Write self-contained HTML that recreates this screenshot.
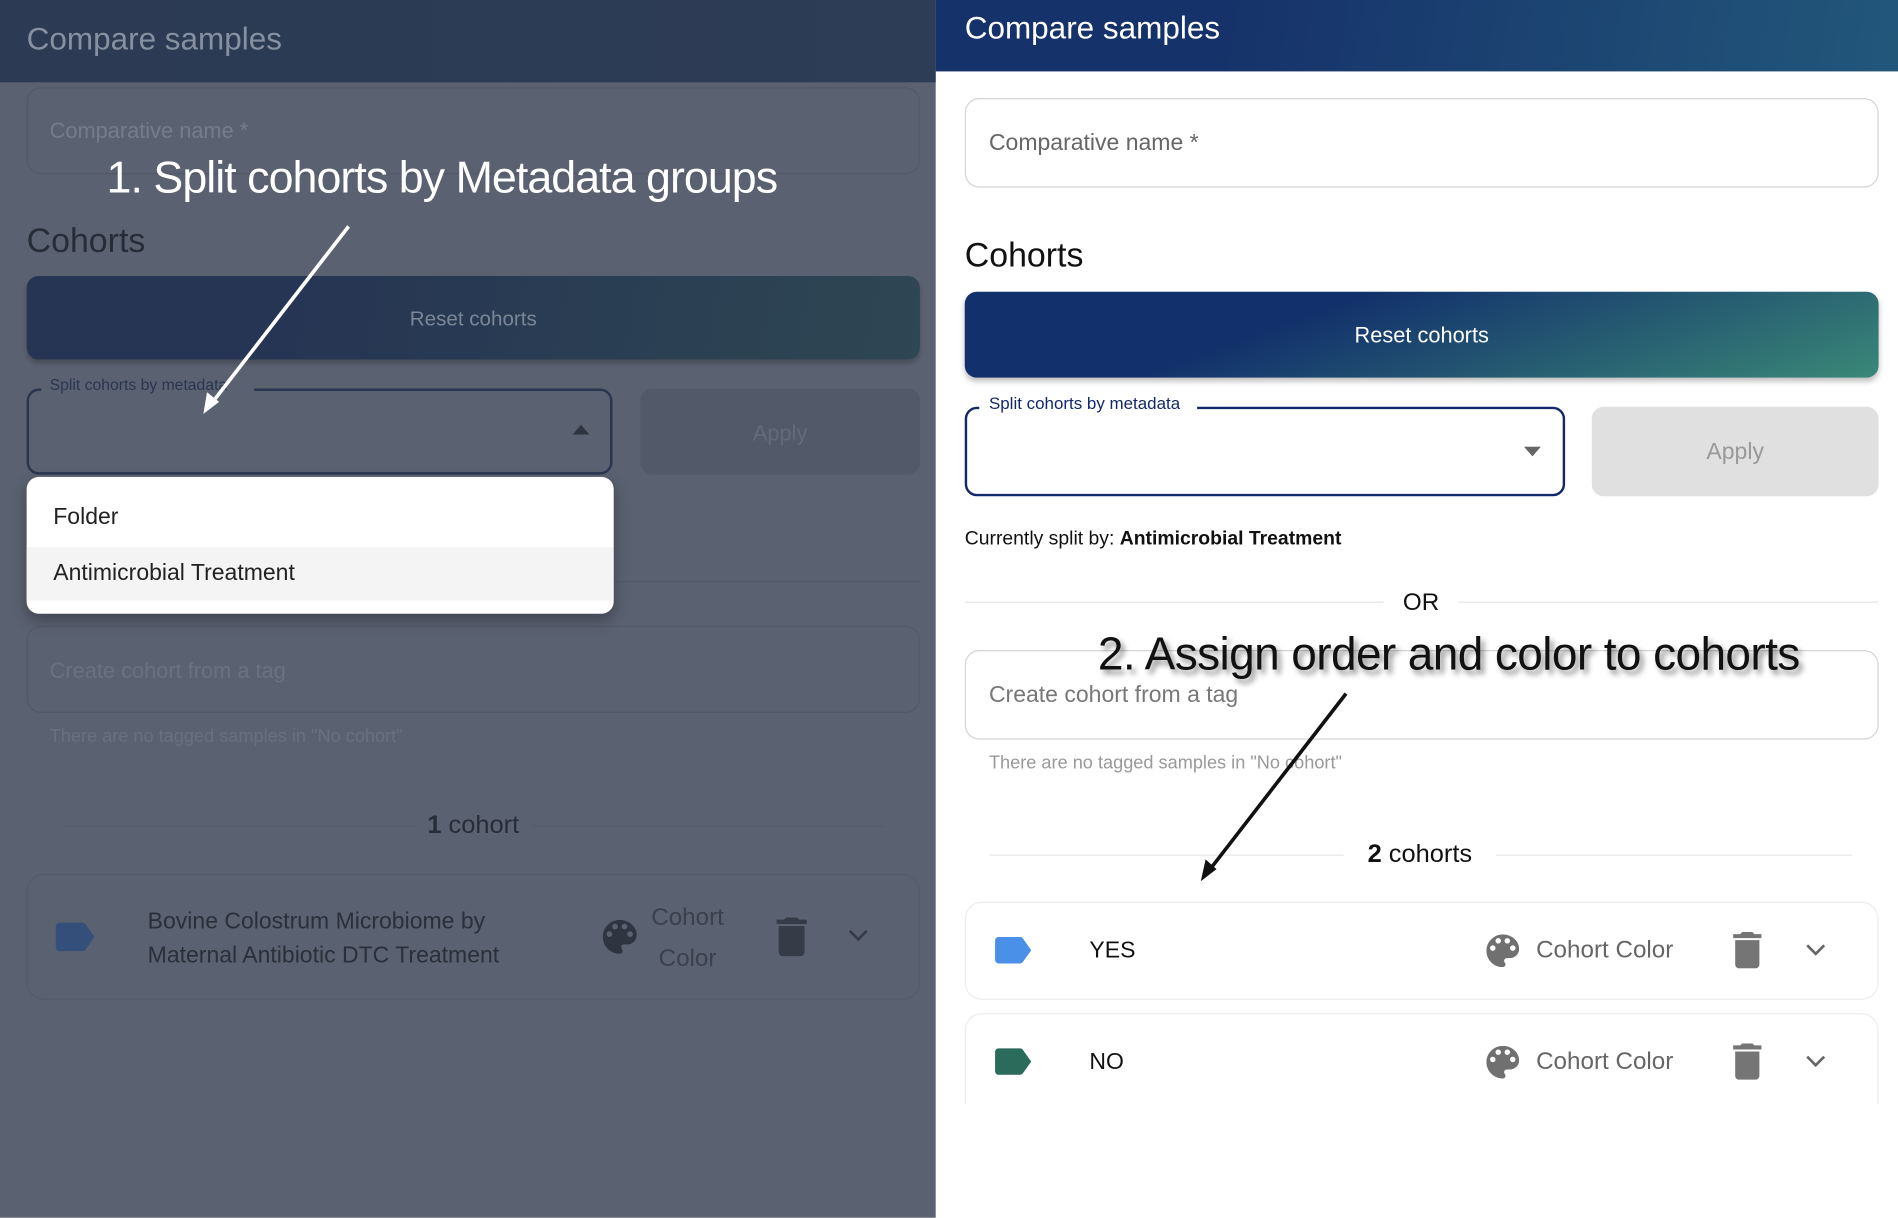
<!DOCTYPE html>
<html><head><meta charset="utf-8"><style>
html,body{margin:0;padding:0;width:1898px;height:1218px;overflow:hidden;background:#fff;font-family:"Liberation Sans",sans-serif;}
#s{position:absolute;left:0;top:0;width:1568px;height:1006px;transform:scale(1.21046);transform-origin:0 0;}
.a{position:absolute;box-sizing:border-box;}
.t{position:absolute;white-space:nowrap;line-height:1;}
svg{position:absolute;}
</style></head><body><div id="s">

<!-- LEFT (dimmed) -->
<div class="a" style="left:0;top:0;width:773px;height:1006px;background:#5a6170;"></div>
<div class="a" style="left:0;top:0;width:773px;height:68px;background:linear-gradient(90deg,#2c3a53,#2d3d55);"></div>
<div class="t" style="left:22px;top:19px;font-size:26px;color:#8690a0;">Compare samples</div>
<div class="a" style="left:22px;top:72px;width:738px;height:72px;border:1px solid #525969;border-radius:12px;"></div>
<div class="t" style="left:41px;top:99px;font-size:18px;color:#757d8a;">Comparative name *</div>
<div class="t" style="left:22px;top:185px;font-size:28px;color:#272d38;">Cohorts</div>
<div class="a" style="left:22px;top:228px;width:738px;height:69px;border-radius:10px;background:linear-gradient(100deg,#263553 30%,#2e4753);box-shadow:0 3px 4px rgba(0,0,0,.2);"></div>
<div class="t" style="left:22px;width:738px;text-align:center;top:255px;font-size:17px;color:#7c8696;">Reset cohorts</div>
<div class="a" style="left:22px;top:321px;width:484px;height:71px;border:2px solid #2a3650;border-radius:10px;"></div>
<div class="a" style="left:34px;top:310px;width:176px;height:14px;background:#5a6170;"></div>
<div class="t" style="left:41px;top:311px;font-size:13px;color:#2a3650;">Split cohorts by metadata</div>
<svg style="left:473px;top:351px" width="14" height="8"><path d="M0 8L7 0L14 8Z" fill="#2f3540"/></svg>
<div class="a" style="left:529px;top:321px;width:231px;height:71px;border-radius:10px;background:#525968;"></div>
<div class="t" style="left:529px;width:231px;text-align:center;top:349px;font-size:18px;color:#646b78;">Apply</div>
<div class="a" style="left:22px;top:480px;width:738px;height:1px;background:#535a68;"></div>
<div class="a" style="left:22px;top:517px;width:738px;height:72px;border:1px solid #525969;border-radius:12px;"></div>
<div class="t" style="left:41px;top:545px;font-size:18px;color:#6a7280;">Create cohort from a tag</div>
<div class="t" style="left:41px;top:601px;font-size:15px;color:#697180;">There are no tagged samples in "No cohort"</div>
<div class="a" style="left:52px;top:682px;width:290px;height:1px;background:#555c6a;"></div>
<div class="a" style="left:440px;top:682px;width:290px;height:1px;background:#555c6a;"></div>
<div class="t" style="left:22px;width:738px;text-align:center;top:671px;font-size:21px;color:#272d38;"><b>1</b> cohort</div>
<div class="a" style="left:22px;top:722px;width:738px;height:104px;border:1px solid #545b69;border-radius:14px;"></div>
<svg style="left:46px;top:762px" width="32" height="24" viewBox="3 5 19 14"><path d="M17.63 5.84C17.27 5.33 16.67 5 16 5L5 5.01C3.9 5.01 3 5.9 3 7v10c0 1.1.9 1.99 2 1.99L16 19c.67 0 1.27-.33 1.63-.84L22 12z" fill="#34507a"/></svg>
<div class="t" style="left:122px;top:748px;font-size:19px;color:#2a303a;line-height:28px;">Bovine Colostrum Microbiome by<br>Maternal Antibiotic DTC Treatment</div>
<svg style="left:498px;top:760px" width="28" height="28" viewBox="3 3 18 18"><path d="M12 3c-4.97 0-9 4.03-9 9s4.03 9 9 9c.83 0 1.5-.67 1.5-1.5 0-.39-.15-.74-.39-1.01-.23-.26-.38-.61-.38-.99 0-.83.67-1.5 1.5-1.5H16c2.76 0 5-2.24 5-5 0-4.42-4.03-8-9-8zm-5.5 9c-.83 0-1.5-.67-1.5-1.5S5.67 9 6.5 9 8 9.67 8 10.5 7.33 12 6.5 12zm3-4C8.67 8 8 7.33 8 6.5S8.67 5 9.5 5s1.5.67 1.5 1.5S10.33 8 9.5 8zm5 0c-.83 0-1.5-.67-1.5-1.5S13.67 5 14.5 5s1.5.67 1.5 1.5S15.33 8 14.5 8zm3 4c-.83 0-1.5-.67-1.5-1.5S16.67 9 17.5 9s1.5.67 1.5 1.5-.67 1.5-1.5 1.5z" fill="#2f3540"/></svg>
<div class="t" style="left:535px;width:66px;text-align:center;top:741px;font-size:20px;color:#3a404c;line-height:34px;">Cohort<br>Color</div>
<svg style="left:640px;top:758px" width="28" height="32" viewBox="5 3 14 18"><path d="M6 19c0 1.1.9 2 2 2h8c1.1 0 2-.9 2-2V7H6v12zM19 4h-3.5l-1-1h-5l-1 1H5v2h14V4z" fill="#353b47"/></svg>
<svg style="left:700px;top:767px" width="18" height="12"><path d="M2 2L9 9L16 2" stroke="#353b47" stroke-width="2.2" fill="none"/></svg>

<!-- dropdown menu -->
<div class="a" style="left:22px;top:394px;width:485px;height:113px;background:#fff;border-radius:10px;box-shadow:0 5px 12px rgba(0,0,0,.3);overflow:hidden;">
<div class="a" style="left:0;top:58px;width:485px;height:44px;background:#f4f4f4;"></div>
</div>
<div class="t" style="left:44px;top:418px;font-size:19px;color:#222;">Folder</div>
<div class="t" style="left:44px;top:464px;font-size:19px;color:#222;">Antimicrobial Treatment</div>

<div class="t" style="left:88px;top:128px;font-size:37px;color:#fff;letter-spacing:-0.8px;">1. Split cohorts by Metadata groups</div>
<svg style="left:0;top:0" width="773" height="400"><line x1="288" y1="187" x2="175" y2="333" stroke="#fff" stroke-width="3"/><path d="M168 342L171 324L181 332Z" fill="#fff"/></svg>

<!-- RIGHT -->
<div class="a" style="left:773px;top:0;width:795px;height:59px;background:linear-gradient(100deg,#16326a 30%,#22577a);"></div>
<div class="t" style="left:797px;top:10px;font-size:26px;color:#fff;">Compare samples</div>
<div class="a" style="left:797px;top:81px;width:755px;height:74px;border:1px solid #d4d4d4;border-radius:12px;"></div>
<div class="t" style="left:817px;top:109px;font-size:19px;color:#666;">Comparative name *</div>
<div class="t" style="left:797px;top:197px;font-size:28px;color:#111;">Cohorts</div>
<div class="a" style="left:797px;top:241px;width:755px;height:71px;border-radius:10px;background:linear-gradient(160deg,#12306c 35%,#3a8877);box-shadow:0 3px 5px rgba(0,0,0,.25);"></div>
<div class="t" style="left:797px;width:755px;text-align:center;top:268px;font-size:18px;color:#fff;">Reset cohorts</div>
<div class="a" style="left:797px;top:336px;width:496px;height:74px;border:2px solid #13286a;border-radius:10px;"></div>
<div class="a" style="left:809px;top:326px;width:180px;height:14px;background:#fff;"></div>
<div class="t" style="left:817px;top:326px;font-size:14px;color:#13286a;">Split cohorts by metadata</div>
<svg style="left:1259px;top:369px" width="14" height="8"><path d="M0 0L7 8L14 0Z" fill="#666"/></svg>
<div class="a" style="left:1315px;top:336px;width:237px;height:74px;border-radius:10px;background:#e0e0e0;"></div>
<div class="t" style="left:1315px;width:237px;text-align:center;top:364px;font-size:19px;color:#999;">Apply</div>
<div class="t" style="left:797px;top:438px;font-size:16px;color:#111;">Currently split by: <b>Antimicrobial Treatment</b></div>
<div class="a" style="left:797px;top:497px;width:346px;height:1px;background:#e6e6e6;"></div>
<div class="a" style="left:1205px;top:497px;width:347px;height:1px;background:#e6e6e6;"></div>
<div class="t" style="left:1143px;width:62px;text-align:center;top:488px;font-size:20px;color:#111;">OR</div>
<div class="a" style="left:797px;top:537px;width:755px;height:74px;border:1px solid #d4d4d4;border-radius:12px;"></div>
<div class="t" style="left:817px;top:565px;font-size:19px;color:#777;">Create cohort from a tag</div>
<div class="t" style="left:817px;top:623px;font-size:15px;color:#999;">There are no tagged samples in "No cohort"</div>
<div class="a" style="left:817px;top:706px;width:293px;height:1px;background:#e8e8e8;"></div>
<div class="a" style="left:1236px;top:706px;width:294px;height:1px;background:#e8e8e8;"></div>
<div class="t" style="left:1110px;width:126px;text-align:center;top:695px;font-size:21px;color:#111;"><b>2</b> cohorts</div>

<div class="a" style="left:797px;top:745px;width:755px;height:81px;border:1px solid #ececec;border-radius:14px;"></div>
<svg style="left:822px;top:774px" width="30" height="22" viewBox="3 5 19 14"><path d="M17.63 5.84C17.27 5.33 16.67 5 16 5L5 5.01C3.9 5.01 3 5.9 3 7v10c0 1.1.9 1.99 2 1.99L16 19c.67 0 1.27-.33 1.63-.84L22 12z" fill="#4a8fe8"/></svg>
<div class="t" style="left:900px;top:776px;font-size:19px;color:#111;">YES</div>
<svg style="left:1228px;top:772px" width="27" height="27" viewBox="3 3 18 18"><path d="M12 3c-4.97 0-9 4.03-9 9s4.03 9 9 9c.83 0 1.5-.67 1.5-1.5 0-.39-.15-.74-.39-1.01-.23-.26-.38-.61-.38-.99 0-.83.67-1.5 1.5-1.5H16c2.76 0 5-2.24 5-5 0-4.42-4.03-8-9-8zm-5.5 9c-.83 0-1.5-.67-1.5-1.5S5.67 9 6.5 9 8 9.67 8 10.5 7.33 12 6.5 12zm3-4C8.67 8 8 7.33 8 6.5S8.67 5 9.5 5s1.5.67 1.5 1.5S10.33 8 9.5 8zm5 0c-.83 0-1.5-.67-1.5-1.5S13.67 5 14.5 5s1.5.67 1.5 1.5S15.33 8 14.5 8zm3 4c-.83 0-1.5-.67-1.5-1.5S16.67 9 17.5 9s1.5.67 1.5 1.5-.67 1.5-1.5 1.5z" fill="#707070"/></svg>
<div class="t" style="left:1269px;top:775px;font-size:20px;color:#666;">Cohort Color</div>
<svg style="left:1430px;top:770px" width="27" height="30" viewBox="5 3 14 18"><path d="M6 19c0 1.1.9 2 2 2h8c1.1 0 2-.9 2-2V7H6v12zM19 4h-3.5l-1-1h-5l-1 1H5v2h14V4z" fill="#757575"/></svg>
<svg style="left:1491px;top:779px" width="18" height="12"><path d="M2 2L9 9L16 2" stroke="#666" stroke-width="2.2" fill="none"/></svg>

<div class="a" style="left:797px;top:837px;width:755px;height:100px;border:1px solid #ececec;border-radius:14px;"></div>
<div class="a" style="left:790px;top:912px;width:770px;height:40px;background:#fff;"></div>
<svg style="left:822px;top:866px" width="30" height="22" viewBox="3 5 19 14"><path d="M17.63 5.84C17.27 5.33 16.67 5 16 5L5 5.01C3.9 5.01 3 5.9 3 7v10c0 1.1.9 1.99 2 1.99L16 19c.67 0 1.27-.33 1.63-.84L22 12z" fill="#2b6b5c"/></svg>
<div class="t" style="left:900px;top:868px;font-size:19px;color:#111;">NO</div>
<svg style="left:1228px;top:864px" width="27" height="27" viewBox="3 3 18 18"><path d="M12 3c-4.97 0-9 4.03-9 9s4.03 9 9 9c.83 0 1.5-.67 1.5-1.5 0-.39-.15-.74-.39-1.01-.23-.26-.38-.61-.38-.99 0-.83.67-1.5 1.5-1.5H16c2.76 0 5-2.24 5-5 0-4.42-4.03-8-9-8zm-5.5 9c-.83 0-1.5-.67-1.5-1.5S5.67 9 6.5 9 8 9.67 8 10.5 7.33 12 6.5 12zm3-4C8.67 8 8 7.33 8 6.5S8.67 5 9.5 5s1.5.67 1.5 1.5S10.33 8 9.5 8zm5 0c-.83 0-1.5-.67-1.5-1.5S13.67 5 14.5 5s1.5.67 1.5 1.5S15.33 8 14.5 8zm3 4c-.83 0-1.5-.67-1.5-1.5S16.67 9 17.5 9s1.5.67 1.5 1.5-.67 1.5-1.5 1.5z" fill="#707070"/></svg>
<div class="t" style="left:1269px;top:867px;font-size:20px;color:#666;">Cohort Color</div>
<svg style="left:1430px;top:862px" width="27" height="30" viewBox="5 3 14 18"><path d="M6 19c0 1.1.9 2 2 2h8c1.1 0 2-.9 2-2V7H6v12zM19 4h-3.5l-1-1h-5l-1 1H5v2h14V4z" fill="#757575"/></svg>
<svg style="left:1491px;top:871px" width="18" height="12"><path d="M2 2L9 9L16 2" stroke="#666" stroke-width="2.2" fill="none"/></svg>

<div class="t" style="left:907px;top:522px;font-size:38px;color:#111;letter-spacing:-0.5px;text-shadow:3px 4px 5px rgba(0,0,0,.45);">2. Assign order and color to cohorts</div>
<svg style="left:773px;top:0" width="795" height="1006"><line x1="339" y1="573" x2="226" y2="719" stroke="#111" stroke-width="3"/><path d="M219 728L223 710L232 718Z" fill="#111"/></svg>

</div></body></html>
